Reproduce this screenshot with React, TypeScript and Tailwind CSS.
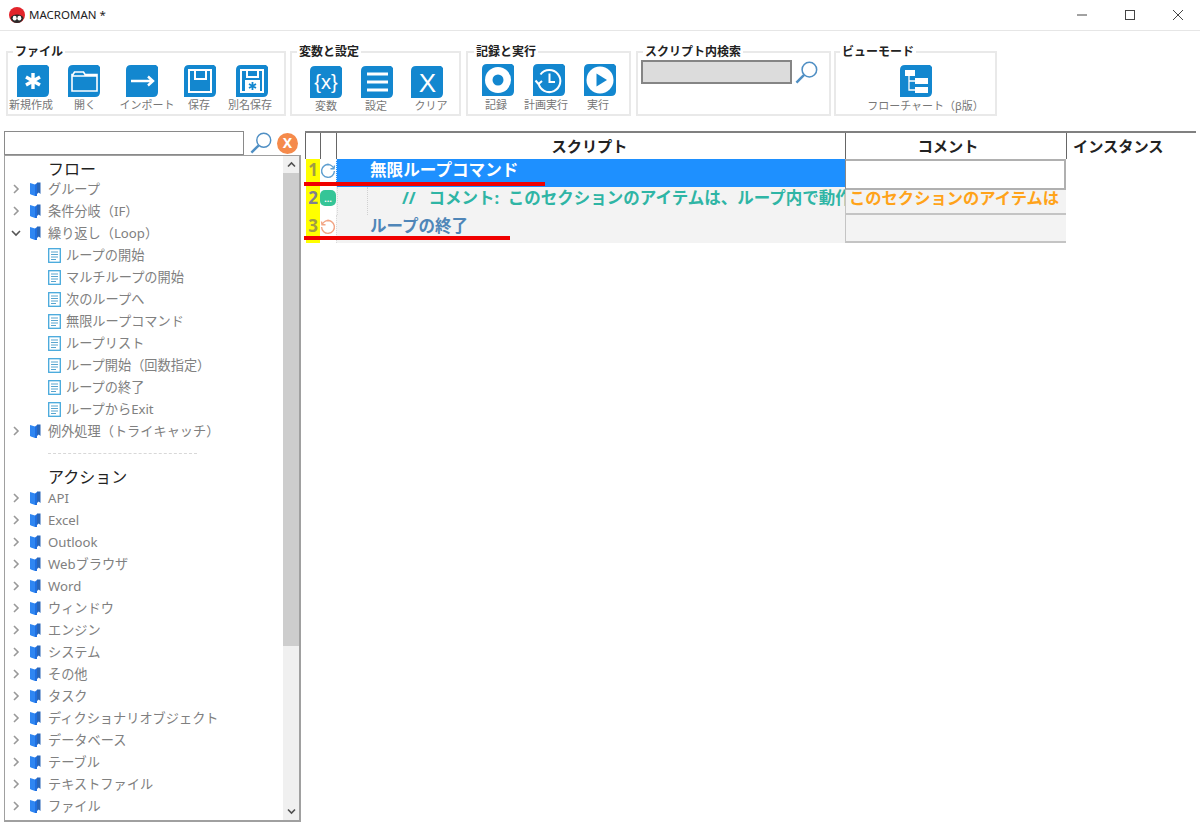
import React from "react";

const FONT = '"Noto Sans", "Noto Sans CJK JP", sans-serif';

function Tile({ children }: { children?: React.ReactNode }) {
  return (
    <svg width="32" height="32" viewBox="0 0 32 32" className="block">
      <path d="M5 0H30L32 2V27Q32 32 27 32H0V5Q0 0 5 0Z" fill="#1387cf" />
      {children}
    </svg>
  );
}

const W = { stroke: "#fff", fill: "none", strokeWidth: 2 };

const icons: Record<string, React.ReactNode> = {
  star: (
    <g stroke="#fff" strokeWidth="3.4" strokeLinecap="butt">
      <path d="M16 8V24M9 12L23 20M23 12L9 20" />
    </g>
  ),
  folder: <path {...W} strokeWidth={1.6} d="M4 9.5V26H29V9.5H17L15.5 7H6.5L5 9.5ZM4 11H29" />,
  arrow: <path {...W} strokeWidth={2.4} d="M5 16H27M22 11.5L27 16L22 20.5" />,
  save: <path {...W} d="M5 5H27V27H5ZM11 5V14H22V5" />,
  saveas: (
    <g>
      <path {...W} d="M5 5H27V27H5ZM11 5V12H22V5" />
      <rect x="9" y="15" width="15" height="12" fill="#fff" />
      <path stroke="#1387cf" strokeWidth="1.8" d="M16.5 17V25M13 19L20 23M20 19L13 23" />
    </g>
  ),
  vars: (
    <text x="16" y="23" textAnchor="middle" fill="#fff" fontSize="20" fontFamily='"Liberation Sans", sans-serif'>
      {"{x}"}
    </text>
  ),
  menu: <path stroke="#fff" strokeWidth="3" d="M6 8H27M6 16H27M6 24H27" />,
  clear: (
    <text x="16.5" y="26" textAnchor="middle" fill="#fff" fontSize="26" fontFamily='"Liberation Sans", sans-serif'>
      X
    </text>
  ),
  record: (
    <g>
      <circle cx="16" cy="16" r="13" fill="#fff" />
      <circle cx="16" cy="16" r="5.5" fill="#1387cf" />
    </g>
  ),
  clock: <path {...W} strokeWidth={2} d="M7.5 10.5A11 11 0 1 1 5.5 19M2.5 16.5L5.5 20L9 17M16.5 9.5V18H22" />,
  play: (
    <g>
      <circle cx="16" cy="16" r="13.5" fill="#fff" />
      <path d="M12.5 9.5L23 16L12.5 22.5Z" fill="#1387cf" />
    </g>
  ),
  flow: (
    <g fill="#fff">
      <rect x="5" y="5" width="10" height="6" />
      <rect x="15" y="13" width="13" height="6" />
      <rect x="15" y="22" width="13" height="6" />
      <path d="M9 11V25H15M9 16H15" stroke="#fff" strokeWidth="1.3" fill="none" />
    </g>
  ),
};

function ToolButton({ icon, label, w, lc = "mt-px" }: { icon: string; label: string; w: string; lc?: string }) {
  return (
    <div className={`flex flex-col items-center shrink-0 ${w}`}>
      <Tile>{icons[icon]}</Tile>
      <span className={`text-[11px] leading-[14px] text-[#777] whitespace-nowrap ${lc}`}>{label}</span>
    </div>
  );
}

function Group({ title, w, ml, lg, children }: { title: string; w: string; ml: string; lg: string; children: React.ReactNode }) {
  return (
    <fieldset className={`h-[71px] border-2 border-[#e9e9e9] shrink-0 ${w} ${ml}`}>
      <legend className={`px-[2px] text-[12px] leading-[14px] font-bold text-[#222] whitespace-nowrap ${lg}`}>{title}</legend>
      {children}
    </fieldset>
  );
}

function Magnifier({ size }: { size: number }) {
  return (
    <svg width={size} height={size} viewBox="0 0 24 24" className="block shrink-0">
      <circle cx="15" cy="9" r="7.6" fill="none" stroke="#4f8fc4" strokeWidth="1.6" />
      <path d="M9.5 14.5L1.5 22.5" stroke="#4f8fc4" strokeWidth="2.6" />
    </svg>
  );
}

function Chevron({ open }: { open?: boolean }) {
  return (
    <svg width="10" height="10" viewBox="0 0 10 10" className="block">
      {open ? (
        <path d="M1 3L5 7L9 3" fill="none" stroke="#555" strokeWidth="1.6" />
      ) : (
        <path d="M3 1L7 5L3 9" fill="none" stroke="#999" strokeWidth="1.6" />
      )}
    </svg>
  );
}

function Book() {
  return (
    <svg width="11" height="14" viewBox="0 0 11 14" className="block">
      <path d="M0 1L5 2.5V14L1 12.5L0 12Z" fill="#2f86f2" />
      <path d="M5 2.5L7 1V14H5Z" fill="#1f6fe0" />
      <path d="M7 0.5H10.5V12L8.7 10.5L7 12Z" fill="#2a66b8" />
    </svg>
  );
}

function Doc() {
  return (
    <svg width="13" height="15" viewBox="0 0 13 15" className="block">
      <rect x="0.7" y="0.7" width="11.6" height="13.6" fill="#fff" stroke="#45a8dc" strokeWidth="1.3" />
      <path d="M3 4H10M3 6.5H10M3 9H10M3 11.5H8" stroke="#59a5cf" strokeWidth="1" />
    </svg>
  );
}

function GroupRow({ label, open }: { label: string; open?: boolean }) {
  return (
    <div className="h-[22px] flex items-center shrink-0">
      <div className="w-[16px] flex justify-end">
        <Chevron open={open} />
      </div>
      <div className="ml-[9px] w-[13px]">
        <Book />
      </div>
      <span className="ml-[5px] text-[13.2px] text-[#808080] whitespace-nowrap leading-[22px]">{label}</span>
    </div>
  );
}

function ChildRow({ label }: { label: string }) {
  return (
    <div className="h-[22px] flex items-center shrink-0 pl-[43px]">
      <Doc />
      <span className="ml-[5px] text-[13.2px] text-[#808080] whitespace-nowrap leading-[22px]">{label}</span>
    </div>
  );
}

function Heading({ label, h }: { label: string; h: string }) {
  return <div className={`shrink-0 pl-[43px] pt-[4px] text-[16px] leading-[18px] text-[#222] ${h}`}>{label}</div>;
}

function Num({ n, color }: { n: string; color: string }) {
  return (
    <div className={`w-[14px] ml-px bg-[#ffff00] text-center font-bold text-[17px] leading-[22px] ${color}`}>{n}</div>
  );
}

const flowGroups1 = ["グループ", "条件分岐（IF）"];
const loopChildren = ["ループの開始", "マルチループの開始", "次のループへ", "無限ループコマンド", "ループリスト", "ループ開始（回数指定）", "ループの終了", "ループからExit"];
const actions = ["API", "Excel", "Outlook", "Webブラウザ", "Word", "ウィンドウ", "エンジン", "システム", "その他", "タスク", "ディクショナリオブジェクト", "データベース", "テーブル", "テキストファイル", "ファイル", "フォルダ"];

export default function App() {
  return (
    <div className="w-[1200px] h-[825px] overflow-hidden bg-white flex flex-col relative" style={{ fontFamily: FONT }}>
      {/* title bar */}
      <div className="h-[31px] shrink-0 flex items-center border-b border-[#e6e6e6] pl-[9px]">
        <svg width="16" height="16" viewBox="0 0 16 16" className="block">
          <circle cx="8" cy="8" r="8" fill="#e3242b" />
          <path d="M1.5 11Q3 7.5 8 7.5T14.5 11Q13 16 8 16T1.5 11Z" fill="#2a2a2a" />
          <ellipse cx="5.7" cy="11.2" rx="2" ry="2.4" fill="#fff" />
          <ellipse cx="10.3" cy="11.2" rx="2" ry="2.4" fill="#fff" />
        </svg>
        <span className="ml-[4px] text-[11.5px] text-[#222] whitespace-nowrap">MACROMAN *</span>
        <div className="ml-auto flex items-center pr-[16px] gap-[36px]">
          <svg width="12" height="12" viewBox="0 0 12 12" className="block"><path d="M1 6H11" stroke="#444" strokeWidth="1" /></svg>
          <svg width="12" height="12" viewBox="0 0 12 12" className="block"><rect x="1.5" y="1.5" width="9" height="9" fill="none" stroke="#444" strokeWidth="1" /></svg>
          <svg width="12" height="12" viewBox="0 0 12 12" className="block"><path d="M1 1L11 11M11 1L1 11" stroke="#444" strokeWidth="1" /></svg>
        </div>
      </div>

      {/* toolbar */}
      <div className="h-[100px] shrink-0 flex items-start pt-[14px] pl-[6px]">
        <Group title="ファイル" w="w-[280px]" ml="" lg="ml-[5px]">
          <div className="flex pt-[6px]">
            <ToolButton icon="star" label="新規作成" w="w-[50px]" lc="mt-px mr-[4px]" />
            <ToolButton icon="folder" label="開く" w="w-[52px]" lc="mt-px ml-[2px]" />
            <ToolButton icon="arrow" label="インポート" w="w-[64px]" lc="mt-px ml-[10px]" />
            <ToolButton icon="save" label="保存" w="w-[52px]" lc="mt-px mr-[2px]" />
            <ToolButton icon="saveas" label="別名保存" w="w-[52px]" lc="mt-px mr-[4px]" />
          </div>
        </Group>
        <Group title="変数と設定" w="w-[171px]" ml="ml-[4px]" lg="ml-[5px]">
          <div className="flex pt-[7px] pl-[8px]">
            <ToolButton icon="vars" label="変数" w="w-[52px]" />
            <ToolButton icon="menu" label="設定" w="w-[50px]" lc="mt-px mr-[2px]" />
            <ToolButton icon="clear" label="クリア" w="w-[50px]" lc="mt-px ml-[8px]" />
          </div>
        </Group>
        <Group title="記録と実行" w="w-[165px]" ml="ml-[5px]" lg="ml-[6px]">
          <div className="flex pt-[5px] pl-[4px]">
            <ToolButton icon="record" label="記録" w="w-[51px]" lc="mt-[2px] mr-[3px]" />
            <ToolButton icon="clock" label="計画実行" w="w-[51px]" lc="mt-[2px] mr-[5px]" />
            <ToolButton icon="play" label="実行" w="w-[51px]" lc="mt-[2px] mr-[3px]" />
          </div>
        </Group>
        <Group title="スクリプト内検索" w="w-[195px]" ml="ml-[5px]" lg="ml-[5px]">
          <div className="flex items-start pt-[1px] pl-[3px]">
            <div className="w-[151px] h-[24px] bg-[#dcdcdc] border-2 border-[#858585]" />
            <div className="ml-[3px] mt-[1px]">
              <Magnifier size={23} />
            </div>
          </div>
        </Group>
        <Group title="ビューモード" w="w-[163px]" ml="ml-[3px]" lg="ml-[4px]">
          <div className="flex justify-center pt-[6px]">
            <ToolButton icon="flow" label="フローチャート（β版）" w="w-[130px]" lc="mt-[2px] ml-[20px]" />
          </div>
        </Group>
      </div>

      {/* body */}
      <div className="flex-1 flex min-h-0 items-start">
        {/* left */}
        <div className="ml-[4px] w-[297px] shrink-0 flex flex-col">
          <div className="h-[24px] flex items-center">
            <div className="w-[240px] h-[24px] border-[1.5px] border-[#8a8a8a] bg-white" />
            <div className="ml-[6px]">
              <Magnifier size={22} />
            </div>
            <div className="ml-[5px] w-[21px] h-[21px] rounded-full bg-[#f58a4b] flex items-center justify-center text-white font-bold text-[14px] leading-none">
              X
            </div>
          </div>
          <div className="h-[667px] border border-[#a0a0a0] border-r-2 border-b-2 flex overflow-hidden">
            <div className="flex-1 flex flex-col overflow-hidden">
              <Heading label="フロー" h="h-[22px]" />
              {flowGroups1.map((l) => (
                <GroupRow key={l} label={l} />
              ))}
              <GroupRow label="繰り返し（Loop）" open />
              {loopChildren.map((l) => (
                <ChildRow key={l} label={l} />
              ))}
              <GroupRow label="例外処理（トライキャッチ）" />
              <div className="h-[22px] shrink-0 flex items-center pl-[43px]">
                <div className="w-[149px] border-t border-dashed border-[#d8d8d8]" />
              </div>
              <Heading label="アクション" h="h-[23px]" />
              {actions.map((l) => (
                <GroupRow key={l} label={l} />
              ))}
            </div>
            <div className="w-[16px] shrink-0 bg-[#f0f0f0] flex flex-col">
              <div className="h-[17px] flex items-center justify-center shrink-0">
                <svg width="9" height="9" viewBox="0 0 9 9" className="block"><path d="M1 6.5L4.5 3L8 6.5" fill="none" stroke="#505050" strokeWidth="1.6" /></svg>
              </div>
              <div className="h-[473px] bg-[#cdcdcd] shrink-0" />
              <div className="flex-1" />
              <div className="h-[17px] flex items-center justify-center shrink-0">
                <svg width="9" height="9" viewBox="0 0 9 9" className="block"><path d="M1 2.5L4.5 6L8 2.5" fill="none" stroke="#505050" strokeWidth="1.6" /></svg>
              </div>
            </div>
          </div>
        </div>

        {/* table */}
        <div className="ml-[4px] w-[891px] shrink-0 flex flex-col relative">
          <div className="h-[28px] flex border-t-2 border-[#808080] text-[15.2px] font-bold text-[#222] leading-[26px]">
            <div className="w-[15px] border-l border-[#666]" />
            <div className="w-[16px] border-l border-[#666]" />
            <div className="w-[509px] border-l border-[#666] text-center pr-[3px]">スクリプト</div>
            <div className="w-[221px] border-l border-[#666] text-center pr-[16px]">コメント</div>
            <div className="flex-1 border-l border-[#666] pl-[6px]">インスタンス</div>
          </div>

          {/* row 1 */}
          <div className="h-[28px] flex relative">
            <Num n="1" color="text-[#a09c45]" />
            <div className="w-[16px] flex items-start justify-center pt-[4px]">
              <svg width="16" height="16" viewBox="0 0 16 16" className="block">
                <path d="M9.5 1.7A6.4 6.4 0 1 0 14.4 8M6.5 1.7A6.4 6.4 0 0 1 13.8 5.5M10.5 5.8H14L14.5 2.5" fill="none" stroke="#5f9fd0" strokeWidth="1.4" />
              </svg>
            </div>
            <div className="w-[509px] bg-[#1e90ff] border-l border-dotted border-[#d5e9ff] pl-[33px] text-[16.6px] font-bold text-white leading-[22px] whitespace-nowrap">
              無限ループコマンド
            </div>
            <div className="w-[221px] h-[31px] bg-white border-t-2 border-l border-r-2 border-b-2 border-[#b0b0b0] border-l-[#888] relative z-10" />
          </div>

          {/* row 2 */}
          <div className="h-[28px] flex">
            <Num n="2" color="text-[#7f8090]" />
            <div className="w-[16px] flex items-start justify-center pt-[3px]">
              <div className="w-[16px] h-[16px] rounded-[5px] bg-[#35c597] flex items-center justify-center text-white text-[9px] leading-none font-bold">…</div>
            </div>
            <div className="w-[509px] bg-[#f3f3f3] pl-[66px] flex items-start overflow-hidden relative">
              <div className="absolute left-[1px] top-0 bottom-0 border-l border-dotted border-[#d9d9d9]" />
              <div className="absolute left-[31px] top-0 bottom-0 border-l border-dotted border-[#d0d0d0]" />
              <span className="text-[16.5px] font-bold text-[#2fb5a5] whitespace-pre leading-[22px]">{"//   コメント:  このセクションのアイテムは、ループ内で動作"}</span>
            </div>
            <div className="w-[221px] bg-[#f3f3f3] border-b-2 border-l border-[#c4c4c4] overflow-hidden flex items-start pl-[3px]">
              <span className="text-[16.3px] font-bold text-[#ffa31a] whitespace-nowrap leading-[22px]">このセクションのアイテムは</span>
            </div>
          </div>

          {/* row 3 */}
          <div className="h-[28px] flex">
            <Num n="3" color="text-[#a09c45]" />
            <div className="w-[16px] flex items-start justify-center pt-[4px]">
              <svg width="16" height="16" viewBox="0 0 16 16" className="block">
                <path d="M6.5 1.7A6.4 6.4 0 1 1 1.6 8M9.5 1.7A6.4 6.4 0 0 0 2.2 5.5M5.5 5.8H2L1.5 2.5" fill="none" stroke="#f2a585" strokeWidth="1.4" />
              </svg>
            </div>
            <div className="w-[509px] bg-[#f3f3f3] border-l border-dotted border-[#d9d9d9] pl-[33px] text-[16.5px] font-bold text-[#4f86b8] leading-[22px] whitespace-nowrap">
              ループの終了
            </div>
            <div className="w-[221px] bg-[#f3f3f3] border-b-2 border-l border-[#c4c4c4]" />
          </div>

          {/* red annotations */}
          <div className="absolute left-[-1px] top-[51px] w-[241px] h-[4px] bg-[#f00000] z-20" />
          <div className="absolute left-[-1px] top-[105px] w-[206px] h-[4px] bg-[#f00000] z-20" />
        </div>
      </div>
    </div>
  );
}
